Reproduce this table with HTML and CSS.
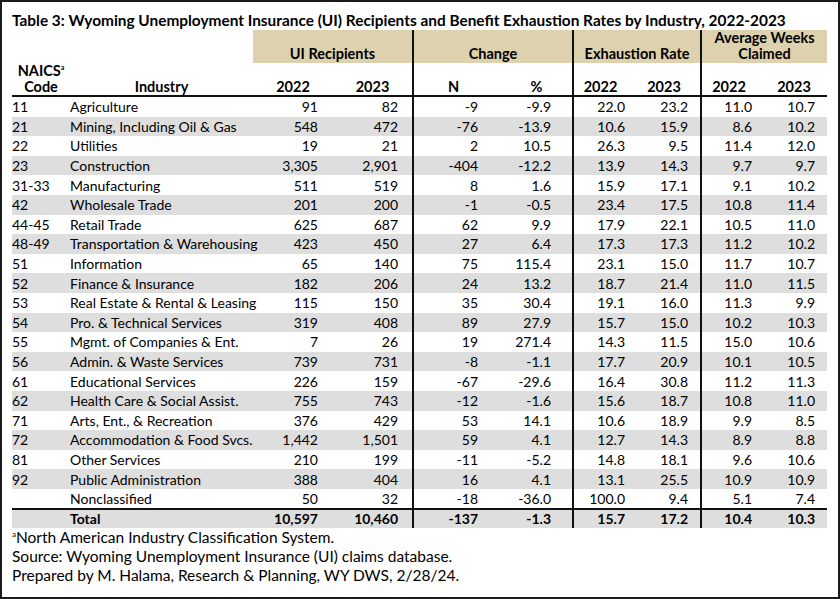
FILE: index.html
```html
<!DOCTYPE html>
<html>
<head>
<meta charset="utf-8">
<link rel="stylesheet" href="styles.css">
</head>
<body>
<div class="frame">
  <h1 class="title">Table 3: Wyoming Unemployment Insurance (UI) Recipients and Benefit Exhaustion Rates by Industry, 2022-2023</h1>
  <table class="data">
    <colgroup>
      <col class="c-code"><col class="c-ind"><col class="c-ui22"><col class="c-ui23"><col class="c-n"><col class="c-pct"><col class="c-e22"><col class="c-e23"><col class="c-a22"><col class="c-a23">
    </colgroup>
    <thead>
      <tr class="band">
        <th colspan="2" class="blank"></th>
        <th colspan="2" class="grp">UI Recipients</th>
        <th colspan="2" class="grp div">Change</th>
        <th colspan="2" class="grp div">Exhaustion Rate</th>
        <th colspan="2" class="grp div">Average Weeks<br>Claimed</th>
      </tr>
      <tr class="sub">
        <th class="h-code">NAICS<sup>a</sup><br>Code</th>
        <th class="h-ind">Industry</th>
        <th class="h-ui22">2022</th>
        <th class="h-ui23">2023</th>
        <th class="h-n div">N</th>
        <th class="h-pct">%</th>
        <th class="h-e22 div">2022</th>
        <th class="h-e23">2023</th>
        <th class="h-a22 div">2022</th>
        <th class="h-a23">2023</th>
      </tr>
    </thead>
    <tbody>
      <tr><td>11</td><td>Agriculture</td><td>91</td><td>82</td><td>-9</td><td>-9.9</td><td>22.0</td><td>23.2</td><td>11.0</td><td>10.7</td></tr>
      <tr><td>21</td><td>Mining, Including Oil &amp; Gas</td><td>548</td><td>472</td><td>-76</td><td>-13.9</td><td>10.6</td><td>15.9</td><td>8.6</td><td>10.2</td></tr>
      <tr><td>22</td><td>Utilities</td><td>19</td><td>21</td><td>2</td><td>10.5</td><td>26.3</td><td>9.5</td><td>11.4</td><td>12.0</td></tr>
      <tr><td>23</td><td>Construction</td><td>3,305</td><td>2,901</td><td>-404</td><td>-12.2</td><td>13.9</td><td>14.3</td><td>9.7</td><td>9.7</td></tr>
      <tr><td>31-33</td><td>Manufacturing</td><td>511</td><td>519</td><td>8</td><td>1.6</td><td>15.9</td><td>17.1</td><td>9.1</td><td>10.2</td></tr>
      <tr><td>42</td><td>Wholesale Trade</td><td>201</td><td>200</td><td>-1</td><td>-0.5</td><td>23.4</td><td>17.5</td><td>10.8</td><td>11.4</td></tr>
      <tr><td>44-45</td><td>Retail Trade</td><td>625</td><td>687</td><td>62</td><td>9.9</td><td>17.9</td><td>22.1</td><td>10.5</td><td>11.0</td></tr>
      <tr><td>48-49</td><td>Transportation &amp; Warehousing</td><td>423</td><td>450</td><td>27</td><td>6.4</td><td>17.3</td><td>17.3</td><td>11.2</td><td>10.2</td></tr>
      <tr><td>51</td><td>Information</td><td>65</td><td>140</td><td>75</td><td>115.4</td><td>23.1</td><td>15.0</td><td>11.7</td><td>10.7</td></tr>
      <tr><td>52</td><td>Finance &amp; Insurance</td><td>182</td><td>206</td><td>24</td><td>13.2</td><td>18.7</td><td>21.4</td><td>11.0</td><td>11.5</td></tr>
      <tr><td>53</td><td>Real Estate &amp; Rental &amp; Leasing</td><td>115</td><td>150</td><td>35</td><td>30.4</td><td>19.1</td><td>16.0</td><td>11.3</td><td>9.9</td></tr>
      <tr><td>54</td><td>Pro. &amp; Technical Services</td><td>319</td><td>408</td><td>89</td><td>27.9</td><td>15.7</td><td>15.0</td><td>10.2</td><td>10.3</td></tr>
      <tr><td>55</td><td>Mgmt. of Companies &amp; Ent.</td><td>7</td><td>26</td><td>19</td><td>271.4</td><td>14.3</td><td>11.5</td><td>15.0</td><td>10.6</td></tr>
      <tr><td>56</td><td>Admin. &amp; Waste Services</td><td>739</td><td>731</td><td>-8</td><td>-1.1</td><td>17.7</td><td>20.9</td><td>10.1</td><td>10.5</td></tr>
      <tr><td>61</td><td>Educational Services</td><td>226</td><td>159</td><td>-67</td><td>-29.6</td><td>16.4</td><td>30.8</td><td>11.2</td><td>11.3</td></tr>
      <tr><td>62</td><td>Health Care &amp; Social Assist.</td><td>755</td><td>743</td><td>-12</td><td>-1.6</td><td>15.6</td><td>18.7</td><td>10.8</td><td>11.0</td></tr>
      <tr><td>71</td><td>Arts, Ent., &amp; Recreation</td><td>376</td><td>429</td><td>53</td><td>14.1</td><td>10.6</td><td>18.9</td><td>9.9</td><td>8.5</td></tr>
      <tr><td>72</td><td>Accommodation &amp; Food Svcs.</td><td>1,442</td><td>1,501</td><td>59</td><td>4.1</td><td>12.7</td><td>14.3</td><td>8.9</td><td>8.8</td></tr>
      <tr><td>81</td><td>Other Services</td><td>210</td><td>199</td><td>-11</td><td>-5.2</td><td>14.8</td><td>18.1</td><td>9.6</td><td>10.6</td></tr>
      <tr><td>92</td><td>Public Administration</td><td>388</td><td>404</td><td>16</td><td>4.1</td><td>13.1</td><td>25.5</td><td>10.9</td><td>10.9</td></tr>
      <tr><td></td><td>Nonclassified</td><td>50</td><td>32</td><td>-18</td><td>-36.0</td><td>100.0</td><td>9.4</td><td>5.1</td><td>7.4</td></tr>
    </tbody>
    <tfoot>
      <tr class="total"><td></td><td>Total</td><td>10,597</td><td>10,460</td><td>-137</td><td>-1.3</td><td>15.7</td><td>17.2</td><td>10.4</td><td>10.3</td></tr>
    </tfoot>
  </table>
  <div class="notes">
    <p><sup>a</sup>North American Industry Classification System.</p>
    <p>Source: Wyoming Unemployment Insurance (UI) claims database.</p>
    <p>Prepared by M. Halama, Research &amp; Planning, WY DWS, 2/28/24.</p>
  </div>
</div>
</body>
</html>
```

FILE: styles.css
```css
* { box-sizing: border-box; }
html, body { margin: 0; padding: 0; background: #fff; }
body { font-family: Lato, "Open Sans", sans-serif; color: #000; }

.frame {
  width: 840px;
  height: 599px;
  border: 2px solid #1a1a1a;
  padding: 0 10px;
}

.title {
  margin: 0;
  font-size: 15.4px;
  font-weight: 700;
  line-height: 20px;
  padding-top: 8px;
  white-space: nowrap;
}

.data {
  width: 815px;
  table-layout: fixed;
  border-collapse: separate;
  border-spacing: 0;
  font-size: 14px;
}
.c-code { width: 58px; }
.c-ind { width: 183px; }
.c-ui22 { width: 80px; }
.c-ui23 { width: 79px; }
.c-n { width: 81px; }
.c-pct { width: 79px; }
.c-e22 { width: 64px; }
.c-e23 { width: 64px; }
.c-a22 { width: 64px; }
.c-a23 { width: 63px; }

th, td { padding: 0; white-space: nowrap; }
sup { line-height: 0; }

.band th {
  height: 33px;
  font-weight: 700;
  font-size: 14.5px;
  line-height: 15.5px;
  vertical-align: bottom;
  padding-bottom: 2px;
  text-align: center;
}
.band .grp { background: #ddd2ad; }
.band .blank { background: transparent; }
.div { border-left: 2px solid #111; }

.sub th {
  height: 33px;
  vertical-align: bottom;
  font-weight: 700;
  font-size: 14.5px;
  line-height: 16px;
  text-align: center;
  padding-bottom: 0;
  border-bottom: 2px solid #111;
}
.sub sup { font-size: 7px; vertical-align: 6px; }
.h-code { line-height: 16px !important; }
.h-pct { padding-left: 8px !important; }
.h-e22 { padding-right: 9px !important; }
.h-e23 { padding-right: 8px !important; }
.h-a22 { padding-right: 8px !important; }
.h-a23 { padding-right: 3px !important; }

tbody td, tfoot td { height: 19.6px; line-height: 19px; text-align: right; }
tbody tr:nth-child(even) td { background: #dedede; }
tbody td:nth-child(1), tfoot td:nth-child(1) { text-align: left; }
tbody td:nth-child(2), tfoot td:nth-child(2) { text-align: left; }
td:nth-child(3) { padding-right: 15px; }
td:nth-child(4) { padding-right: 14px; }
td:nth-child(5) { padding-right: 15px; border-left: 2px solid #111; }
td:nth-child(6) { padding-right: 21px; }
td:nth-child(7) { padding-right: 11px; border-left: 2px solid #111; }
td:nth-child(8) { padding-right: 12px; }
td:nth-child(9) { padding-right: 12px; border-left: 2px solid #111; }
td:nth-child(10) { padding-right: 12px; }

.total td { font-weight: 700; background: #dedede; border-top: 2px solid #111; height: 20px; line-height: 18px; }

.notes { font-size: 15.5px; line-height: 19px; padding-top: 0; }
.notes p { margin: 0; }
.notes sup { font-size: 8px; vertical-align: 6px; }
```
